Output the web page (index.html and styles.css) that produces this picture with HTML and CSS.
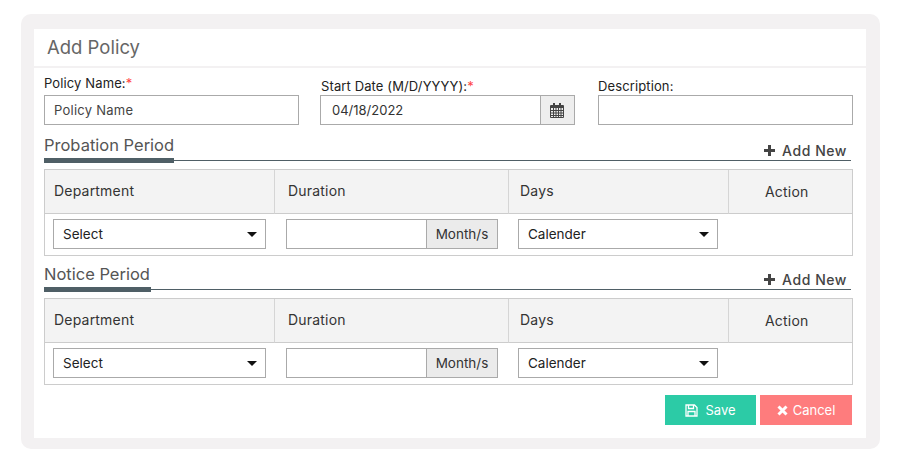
FILE: index.html
```html
<!DOCTYPE html>
<html lang="en">
<head>
<meta charset="utf-8">
<title>Add Policy</title>
<link rel="stylesheet" href="styles.css">
</head>
<body>
<main class="card">
  <div class="panel">
    <h1 class="title">Add Policy</h1>
    <form class="form">
      <div class="fields">
        <div class="field field-first">
          <label class="label">Policy Name:<span class="req">*</span></label>
          <div class="box"><span class="placeholder">Policy Name</span></div>
        </div>
        <div class="field field-date">
          <label class="label">Start Date (M/D/YYYY):<span class="req">*</span></label>
          <div class="box box-date"><span class="value">04/18/2022</span>
            <span class="cal">
              <svg width="14" height="15" viewBox="0 0 14 15"><path fill="#444" d="M3 0h2v2h4V0h2v2h2a1 1 0 0 1 1 1v11a1 1 0 0 1-1 1H1a1 1 0 0 1-1-1V3a1 1 0 0 1 1-1h2zM1 5v9h12V5z"/><path stroke="#444" stroke-width="1" d="M1 7.5h12M1 10h12M1 12.5h12M3.5 5v9M6 5v9M8.5 5v9M11 5v9"/></svg>
            </span>
          </div>
        </div>
        <div class="field">
          <label class="label">Description:</label>
          <div class="box"></div>
        </div>
      </div>

      <section class="period period-probation">
        <div class="section-head">
          <h2 class="section-title section-title-probation">Probation Period</h2>
          <a class="add"><svg class="plus" width="11" height="11" viewBox="0 0 11 11"><path fill="#444" d="M4 0h3v4h4v3H7v4H4V7H0V4h4z"/></svg>Add New</a>
        </div>
        <div class="table">
          <div class="th">Department</div><div class="th">Duration</div><div class="th">Days</div><div class="th th-action">Action</div>
          <div class="td"><div class="select select-dept">Select<i class="caret"></i></div></div>
          <div class="td td-duration"><div class="group"><div class="group-input"></div><div class="group-add">Month/s</div></div></div>
          <div class="td"><div class="select select-days">Calender<i class="caret"></i></div></div>
          <div class="td"></div>
        </div>
      </section>

      <section class="period period-notice">
        <div class="section-head">
          <h2 class="section-title section-title-notice">Notice Period</h2>
          <a class="add"><svg class="plus" width="11" height="11" viewBox="0 0 11 11"><path fill="#444" d="M4 0h3v4h4v3H7v4H4V7H0V4h4z"/></svg>Add New</a>
        </div>
        <div class="table">
          <div class="th">Department</div><div class="th">Duration</div><div class="th">Days</div><div class="th th-action">Action</div>
          <div class="td"><div class="select select-dept">Select<i class="caret"></i></div></div>
          <div class="td td-duration"><div class="group"><div class="group-input"></div><div class="group-add">Month/s</div></div></div>
          <div class="td"><div class="select select-days">Calender<i class="caret"></i></div></div>
          <div class="td"></div>
        </div>
      </section>

      <div class="actions">
        <button type="button" class="btn btn-save"><svg width="13" height="13" viewBox="0 0 13 13"><path fill="none" stroke="#fff" stroke-width="1.3" d="M1 1h8.5L12 3.5V12H1zM3.5 1v3.5h5V1M3 12V7.5h7V12"/></svg>Save</button>
        <button type="button" class="btn btn-cancel"><svg width="11" height="11" viewBox="0 0 11 11"><path stroke="#fff" stroke-width="3" d="M1.5 1.5l8 8M9.5 1.5l-8 8"/></svg>Cancel</button>
      </div>
    </form>
  </div>
</main>
</body>
</html>
```
FILE: styles.css
```css
* { box-sizing: border-box; }
html, body { margin: 0; height: 462px; overflow: hidden; background: #fff; }
body { padding: 14px 20px 13px 21px; font-family: Inter, "Liberation Sans", sans-serif; color: #333; }
.card { background: #f3f1f2; border-radius: 10px; padding: 15px 14px 11px 13px; height: 435px; }
.panel { background: #fff; height: 409px; }
.title { margin: 0; height: 39px; padding: 0 0 2px 13px; border-bottom: 2px solid #f3f1f2; font-size: 18.5px; font-weight: 400; line-height: 37px; color: #666; }
.form { padding: 0 13px 0 10px; }
.fields { display: grid; grid-template-columns: 276px 278px 255px; margin-top: 1px; }
.field { padding-top: 9px; width: 255px; }
.field-first { padding-top: 6px; }
.field-first .label { height: 20px; padding-left: 0; }
.field-date .label { padding-left: 1px; }
.label { display: block; height: 17px; font-size: 13px; line-height: 17px; color: #222; letter-spacing: .12px; white-space: nowrap; }
.req { color: #f44; }
.box { height: 30px; border: 1px solid #aaa; display: flex; align-items: center; background: #fff; }
.placeholder { padding-left: 9px; font-size: 13px; color: #444; letter-spacing: .25px; }
.value { padding-left: 11px; font-size: 13px; color: #333; flex: 1; }
.box-date { align-items: stretch; }
.box-date .value { align-self: center; }
.cal { width: 34px; padding-right: 2px; background: #eee; border-left: 1px solid #aaa; display: flex; align-items: center; justify-content: center; }

.period { width: 809px; }
.section-head { display: flex; justify-content: space-between; align-items: flex-end; border-bottom: 1px solid #4f5f66; width: 807px; }
.period-probation .section-head { height: 36px; }
.period-notice .section-head { height: 34px; }
.section-title { margin: 0; padding-top: 3px; font-size: 16.5px; font-weight: 400; line-height: 24px; color: #555; position: relative; height: 30px; }
.section-title::after { content: ""; position: absolute; left: 0; bottom: -3px; height: 5px; background: #4f5f66; }
.section-title-probation::after { width: 130px; }
.section-title-notice::after { width: 107px; }
.add { display: flex; align-items: center; font-size: 14px; font-weight: 500; color: #444; margin-right: 4px; height: 20px; letter-spacing: .55px; }
.plus { margin-right: 7px; }
.table { display: grid; grid-template-columns: 230px 234px 220px 123px; margin-top: 8px; border: 1px solid #ccc; height: 87px; grid-template-rows: 44px 41px; }
.th { background: #f3f3f3; border-bottom: 1px solid #ccc; border-right: 1px solid #d5d5d5; padding-left: 9px; font-size: 14px; font-weight: 400; color: #333; line-height: 41px; letter-spacing: .2px; }
.th:nth-child(2) { padding-left: 13px; }
.th:nth-child(3) { padding-left: 11px; }
.th-action { border-right: 0; padding-left: 36px; line-height: 43px; }
.td { padding: 5px 8px; }
.td:nth-child(6) { padding-left: 11px; }
.td:nth-child(7) { padding-left: 9px; }
.select { height: 30px; border: 1px solid #aaa; font-size: 13.5px; color: #222; padding-left: 9px; display: flex; align-items: center; justify-content: space-between; background: #fff; }
.select-dept { width: 213px; }
.select-days { width: 200px; }
.caret { width: 0; height: 0; border-left: 5px solid transparent; border-right: 5px solid transparent; border-top: 5px solid #111; margin-right: 8px; }
.group { display: flex; height: 30px; width: 212px; }
.group-input { width: 140px; border: 1px solid #aaa; border-right: 0; background: #fff; }
.group-add { width: 72px; border: 1px solid #aaa; background: #ebebeb; font-size: 13.5px; text-align: center; line-height: 28px; color: #333; }
.actions { display: flex; justify-content: flex-end; gap: 4px; margin-top: 10px; margin-right: 1px; width: 808px; }
.btn { height: 30px; border: 0; color: #fff; font: 400 13px Inter, "Liberation Sans", sans-serif; display: flex; align-items: center; justify-content: center; gap: 7px; padding: 0; }
.btn-save { width: 91px; background: #2ccba6; }
.btn-cancel { width: 92px; background: #fe7c7d; gap: 5px; }
```
